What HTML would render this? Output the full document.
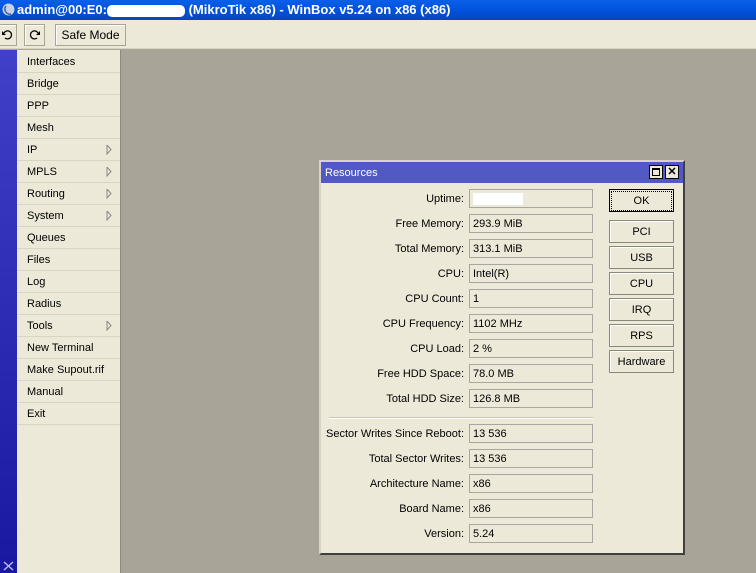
<!DOCTYPE html>
<html><head><meta charset="utf-8"><style>
*{margin:0;padding:0;box-sizing:border-box}
body{width:756px;height:573px;overflow:hidden;position:relative;background:#a8a598;font-family:"Liberation Sans",sans-serif;font-size:11px;color:#000}
.abs{position:absolute}
#title{left:0;top:0;width:756px;height:20px;background:linear-gradient(#0a5fe8,#0050d8 60%,#0846b8);color:#fff;font-weight:bold;font-size:13px;line-height:20px;padding-left:17px;white-space:nowrap}
#tb{left:0;top:20px;width:756px;height:29px;background:#ece9d8;border-bottom:1px solid #d8d4c0}
.tbtn{position:absolute;top:4px;height:22px;border:1px solid #a8a590;background:#ece9d8;box-shadow:inset 1px 1px #fff}
#strip{left:0;top:50px;width:17px;height:523px;background:linear-gradient(#4040c8,#1818a0)}
#menu{left:17px;top:50px;width:104px;height:523px;background:#ece9d8;border-right:1px solid #8c8978}
.mi{position:absolute;left:0;width:103px;height:22px;line-height:23px;padding-left:10px;border-bottom:1px solid #d8d5c4;font-size:11px}
.arr{position:absolute;right:8px;top:6px}
#dlg{left:319px;top:160px;width:366px;height:395px;background:#ece9d8;border:2px solid #5a5a5a;border-color:#d8d5c8 #404040 #404040 #d8d5c8}
#dt{left:0;top:0;width:362px;height:21px;background:#5258c4;color:#fff;line-height:22px;padding-left:4px;font-size:11px}
.lbl{position:absolute;left:-60px;width:203px;text-align:right;font-size:11px;line-height:21px;white-space:nowrap}
.fld{position:absolute;left:148px;width:124px;height:19px;border:1px solid #a7a6a0;background:#ece9d8;line-height:19px;padding-left:3px;font-size:11px}
.btn{position:absolute;left:288px;width:65px;height:23px;border:1px solid #8a8878;background:#ece9d8;text-align:center;line-height:22px;box-shadow:inset 1px 1px #fff;font-size:11px}
</style></head><body>
<div id="title" class="abs">admin@00:E0:<span style="display:inline-block;width:78px;height:12px;background:#fff;border-radius:5px;vertical-align:middle"></span> (MikroTik x86) - WinBox v5.24 on x86 (x86)</div>
<svg class="abs" style="left:2px;top:3px" width="13" height="13"><circle cx="6.5" cy="6.5" r="6" fill="#c8d0e8"/><path d="M4 3a5 5 0 0 0 5 8" stroke="#4060a0" stroke-width="1.5" fill="none"/></svg>
<div id="tb" class="abs">
<div class="tbtn" style="left:-2px;width:19px"><svg width="17" height="20"><path d="M5 8a4 4 0 1 1 1 5" stroke="#000" stroke-width="1.3" fill="none"/><path d="M3 6v4h4z" fill="#000"/></svg></div>
<div class="tbtn" style="left:24px;width:21px"><svg width="19" height="20"><path d="M13 8a4 4 0 1 0-1 5" stroke="#000" stroke-width="1.3" fill="none"/><path d="M15 6v4h-4z" fill="#000"/></svg></div>
<div class="tbtn" style="left:55px;width:71px;text-align:center;line-height:20px;font-size:12px">Safe Mode</div>
</div>
<div id="strip" class="abs"><svg style="position:absolute;left:3px;bottom:2px" width="11" height="10"><path d="M1 1l9 8M10 1L1 9" stroke="#b8b8e8" stroke-width="1.5"/></svg></div>
<div id="menu" class="abs">
<div class="mi" style="top:1px">Interfaces</div>
<div class="mi" style="top:23px">Bridge</div>
<div class="mi" style="top:45px">PPP</div>
<div class="mi" style="top:67px">Mesh</div>
<div class="mi" style="top:89px">IP<svg class="arr" width="6" height="10"><path d="M1 0v9l4-4.5z" fill="none" stroke="#888"/></svg></div>
<div class="mi" style="top:111px">MPLS<svg class="arr" width="6" height="10"><path d="M1 0v9l4-4.5z" fill="none" stroke="#888"/></svg></div>
<div class="mi" style="top:133px">Routing<svg class="arr" width="6" height="10"><path d="M1 0v9l4-4.5z" fill="none" stroke="#888"/></svg></div>
<div class="mi" style="top:155px">System<svg class="arr" width="6" height="10"><path d="M1 0v9l4-4.5z" fill="none" stroke="#888"/></svg></div>
<div class="mi" style="top:177px">Queues</div>
<div class="mi" style="top:199px">Files</div>
<div class="mi" style="top:221px">Log</div>
<div class="mi" style="top:243px">Radius</div>
<div class="mi" style="top:265px">Tools<svg class="arr" width="6" height="10"><path d="M1 0v9l4-4.5z" fill="none" stroke="#888"/></svg></div>
<div class="mi" style="top:287px">New Terminal</div>
<div class="mi" style="top:309px">Make Supout.rif</div>
<div class="mi" style="top:331px">Manual</div>
<div class="mi" style="top:353px">Exit</div>
</div>
<div id="dlg" class="abs">
<div id="dt" class="abs">Resources
<div style="position:absolute;right:20px;top:3px;width:14px;height:14px;background:#ece9d8;border:1px solid #000"><div style="margin:2px;width:8px;height:8px;border:1px solid #000;border-top-width:2px"></div></div>
<div style="position:absolute;right:4px;top:3px;width:14px;height:14px;background:#ece9d8;border:1px solid #000;color:#000;font-weight:bold;font-size:11px;line-height:12px;text-align:center">✕</div>
</div>
<div class="lbl" style="top:27px">Uptime:</div><div class="fld" style="top:27px"><span style="display:inline-block;width:50px;height:12px;background:#fff;vertical-align:middle"></span></div>
<div class="lbl" style="top:52px">Free Memory:</div><div class="fld" style="top:52px">293.9 MiB</div>
<div class="lbl" style="top:77px">Total Memory:</div><div class="fld" style="top:77px">313.1 MiB</div>
<div class="lbl" style="top:102px">CPU:</div><div class="fld" style="top:102px">Intel(R)</div>
<div class="lbl" style="top:127px">CPU Count:</div><div class="fld" style="top:127px">1</div>
<div class="lbl" style="top:152px">CPU Frequency:</div><div class="fld" style="top:152px">1102 MHz</div>
<div class="lbl" style="top:177px">CPU Load:</div><div class="fld" style="top:177px">2 %</div>
<div class="lbl" style="top:202px">Free HDD Space:</div><div class="fld" style="top:202px">78.0 MB</div>
<div class="lbl" style="top:227px">Total HDD Size:</div><div class="fld" style="top:227px">126.8 MB</div>
<div class="abs" style="left:8px;top:255px;width:264px;height:2px;border-top:1px solid #c8c5b4;border-bottom:1px solid #fff"></div>
<div class="lbl" style="top:262px">Sector Writes Since Reboot:</div><div class="fld" style="top:262px">13 536</div>
<div class="lbl" style="top:287px">Total Sector Writes:</div><div class="fld" style="top:287px">13 536</div>
<div class="lbl" style="top:312px">Architecture Name:</div><div class="fld" style="top:312px">x86</div>
<div class="lbl" style="top:337px">Board Name:</div><div class="fld" style="top:337px">x86</div>
<div class="lbl" style="top:362px">Version:</div><div class="fld" style="top:362px">5.24</div>
<div class="btn" style="top:27px;border:1px solid #000;box-shadow:none"><div style="margin:1px;border:1px dotted #000;line-height:18px">OK</div></div>
<div class="btn" style="top:58px">PCI</div>
<div class="btn" style="top:84px">USB</div>
<div class="btn" style="top:110px">CPU</div>
<div class="btn" style="top:136px">IRQ</div>
<div class="btn" style="top:162px">RPS</div>
<div class="btn" style="top:188px">Hardware</div>
</div>
</body></html>
